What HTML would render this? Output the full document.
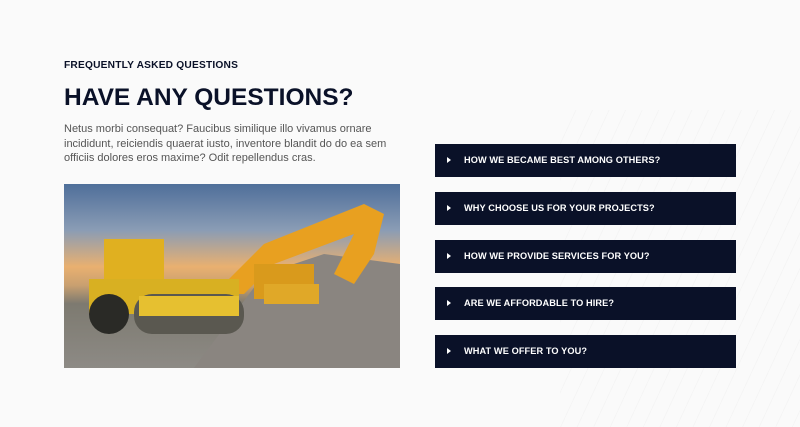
<!DOCTYPE html>
<html><head><style>
body{margin:0;width:800px;height:427px;background:#fafafa;font-family:"Liberation Sans",sans-serif;position:relative;overflow:hidden}
.lbl{position:absolute;left:64px;top:60px;font-size:10.2px;font-weight:bold;color:#0a1128;letter-spacing:.2px}
h1{position:absolute;left:64px;top:84px;margin:0;font-size:24.5px;font-weight:900;color:#0a1128;letter-spacing:0}
p{position:absolute;left:64px;top:122px;margin:0;width:340px;font-size:11px;line-height:14.7px;color:#555}
.img{position:absolute;left:64px;top:184px;width:336px;height:184px;overflow:hidden;background:linear-gradient(180deg,#4f6f9a 0%,#8a9cb5 25%,#e9b070 45%,#c9a070 55%,#7d7a70 65%,#8d8a85 100%)}
.q{position:absolute;left:435px;width:301px;height:33px;background:#0a1128;color:#fff;font-size:9.2px;font-weight:bold;line-height:33px;box-sizing:border-box;padding-left:29px;letter-spacing:.1px}
.q:before{content:"";position:absolute;left:12px;top:13px;border-left:4px solid #fff;border-top:3.5px solid transparent;border-bottom:3.5px solid transparent}
.bg{position:absolute;left:560px;top:110px;width:240px;height:317px;background:repeating-linear-gradient(115deg,transparent 0 14px,rgba(0,0,0,.02) 14px 15px)}
</style></head><body>
<div class="bg"></div>
<div class="lbl">FREQUENTLY ASKED QUESTIONS</div>
<h1>HAVE ANY QUESTIONS?</h1>
<p>Netus morbi consequat? Faucibus similique illo vivamus ornare incididunt, reiciendis quaerat iusto, inventore blandit do do ea sem officiis dolores eros maxime? Odit repellendus cras.</p>
<div class="img">
<svg width="336" height="184" viewBox="0 0 336 184">
<path d="M130 184 L200 90 L260 70 L336 80 L336 184Z" fill="#8a8580"/>
<path d="M150 110 L200 60 L300 20 L320 30 L310 70 L290 100 L270 90 L290 50 L210 80 L180 110Z" fill="#e8a020"/>
<rect x="190" y="80" width="60" height="35" fill="#d99a1c"/>
<rect x="40" y="55" width="60" height="50" fill="#e0b020"/>
<rect x="25" y="95" width="150" height="35" fill="#d8b022"/>
<rect x="70" y="110" width="110" height="40" rx="18" fill="#5a5850"/>
<rect x="75" y="112" width="100" height="20" fill="#e6c030"/>
<circle cx="45" cy="130" r="20" fill="#2a2a26"/>
<rect x="200" y="100" width="55" height="20" fill="#e0a828"/>
</svg>
</div>
<div class="q" style="top:144px">HOW WE BECAME BEST AMONG OTHERS?</div>
<div class="q" style="top:192px">WHY CHOOSE US FOR YOUR PROJECTS?</div>
<div class="q" style="top:240px">HOW WE PROVIDE SERVICES FOR YOU?</div>
<div class="q" style="top:287px">ARE WE AFFORDABLE TO HIRE?</div>
<div class="q" style="top:335px">WHAT WE OFFER TO YOU?</div>
</body></html>
